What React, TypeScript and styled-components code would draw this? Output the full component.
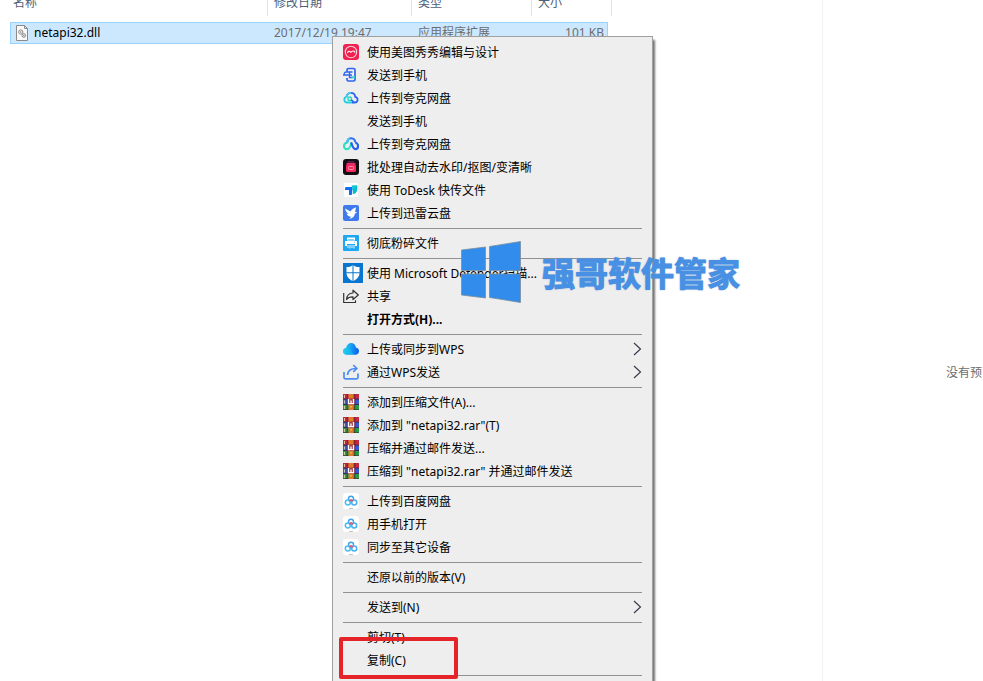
import React from "react";
import styled, { createGlobalStyle } from "styled-components";

const GlobalStyle = createGlobalStyle`
  * { box-sizing: border-box; }
  body {
    margin: 0;
    background: #fff;
    font-family: "Noto Sans", "Noto Sans CJK SC", sans-serif;
    font-size: 12px;
    color: #000;
  }
`;

const Explorer = styled.div`
  position: relative;
  display: flex;
  height: 100vh;
  overflow: hidden;
`;

const FilePane = styled.main`
  flex: 1;
  min-width: 0;
  padding-left: 10px;
`;

const PreviewPane = styled.aside`
  flex: 0 0 161px;
  display: flex;
  align-items: center;
  justify-content: flex-end;
  padding: 62px 1px 0 0;
  border-left: 1px solid #f2f2f2;
  color: #6d6d6d;
`;

const FileTable = styled.table`
  display: block;
  width: 602px;
`;

const TableHead = styled.thead`
  display: block;
`;

const TableBody = styled.tbody`
  display: block;
  padding: 6px 4px 0 0;
`;

const HeadRow = styled.tr`
  display: grid;
  grid-template-columns: 258px 144px 120px 80px;
  height: 16px;
`;

const HeadCell = styled.th<{ $first?: boolean }>`
  padding: 0 0 0 ${(p) => (p.$first ? 3 : 6)}px;
  border-right: 1px solid #e2e2e2;
  color: #4c607a;
  font-weight: 400;
  line-height: 6px;
  text-align: left;
`;

const FileRow = styled.tr`
  display: grid;
  grid-template-columns: 257px 144px 120px 1fr;
  align-items: center;
  height: 22px;
  border: 1px solid #99d1ff;
  background: #cce8ff;
`;

const Cell = styled.td<{ $strong?: boolean; $end?: boolean }>`
  display: flex;
  align-items: center;
  justify-content: ${(p) => (p.$end ? "flex-end" : "flex-start")};
  gap: 4px;
  padding: 0 ${(p) => (p.$end ? 3 : 0)}px 0 ${(p) => (p.$strong ? 3 : 6)}px;
  color: ${(p) => (p.$strong ? "#000" : "#6d6d6d")};
  line-height: 20px;
  white-space: nowrap;
`;

const Menu = styled.div`
  position: absolute;
  top: 36px;
  left: 332px;
  width: 321px;
  padding: 4px 10px 8px;
  border: 1px solid #a0a0a0;
  background: #eee;
  box-shadow: 2px 4px 2px rgba(0, 0, 0, 0.55);
`;

const MenuItem = styled.button<{ $bold?: boolean }>`
  display: flex;
  align-items: center;
  width: 100%;
  height: 23px;
  padding: 0;
  border: 0;
  background: none;
  color: #000;
  font-family: inherit;
  font-size: 12px;
  font-weight: ${(p) => (p.$bold ? 700 : 400)};
  line-height: 20px;
  text-align: left;
  white-space: nowrap;
`;

const IconSlot = styled.span<{ $end?: boolean }>`
  flex: 0 0 ${(p) => (p.$end ? 9 : 24)}px;
  display: flex;
  align-items: center;
  align-self: flex-start;
  height: 22px;
`;

const Label = styled.span`
  flex: 1;
`;

const Separator = styled.hr`
  height: 1px;
  margin: 3px 0;
  border: 0;
  background: #919191;
`;

const Watermark = styled.div`
  position: absolute;
  top: 240px;
  left: 460px;
  display: flex;
  align-items: center;
  gap: 21px;
  color: #4790e4;
  font-family: "Noto Sans CJK SC", sans-serif;
  font-size: 33px;
  font-weight: 700;
  line-height: 64px;
  white-space: nowrap;
  text-shadow: 0 0 2px rgba(110, 130, 155, 0.7);
  -webkit-text-stroke: 1px #4790e4;
  pointer-events: none;
`;

const Highlight = styled.div`
  position: absolute;
  top: 637px;
  left: 339px;
  width: 119px;
  height: 42px;
  border: 4px solid #e5242a;
  border-radius: 2px;
  pointer-events: none;
`;

const Svg = ({ size = 16, children }: { size?: number; children: React.ReactNode }) => (
  <svg width={size} height={size} viewBox="0 0 16 16" fill="none" aria-hidden="true">
    {children}
  </svg>
);

const DllIcon = () => (
  <Svg>
    <path d="M2.5.5h8l3 3v12h-11z" fill="#fafafa" stroke="#8a8a8a" />
    <path d="M10.5.5v3h3" stroke="#8a8a8a" />
    <circle cx="6.8" cy="7" r="2.1" stroke="#888" />
    <circle cx="6.8" cy="7" r=".8" fill="#888" />
    <circle cx="9.8" cy="10.5" r="1.8" stroke="#888" />
    <circle cx="9.8" cy="10.5" r=".7" fill="#888" />
  </Svg>
);

const MeituIcon = () => (
  <Svg>
    <rect width="16" height="16" rx="3" fill="#f0204f" />
    <circle cx="8" cy="8" r="5.7" stroke="#ffd5df" strokeWidth="1.1" />
    <path d="M4.5 9c.5-2 1.700-2.200 3.500-.8 1.400-1.400 3-1.600 3.700-.7M11.700 7.500v1.300" stroke="#fff" strokeWidth="1.1" />
  </Svg>
);

const PhoneIcon = () => (
  <Svg>
    <path d="M4 4.800V3c0-1 .6-1.500 1.500-1.500h5c1 0 1.500.6 1.500 1.500v9.500c0 1-.6 1.500-1.500 1.500h-5C4.500 14 4 13.400 4 12.500V11" stroke="#2f65ee" strokeWidth="1.7" />
    <path d="M9.500 5H3.200C1.800 5 1.200 5.800 1.200 7.300V8M0 8h9M6.500 5.500v5h3" stroke="#2f65ee" strokeWidth="1.4" />
    <path d="M8.500 10.300H12" stroke="#30d8bd" strokeWidth="2" />
  </Svg>
);

const QuarkSmallIcon = () => (
  <Svg>
    <path d="M3.5 6.800C4.100 4 5.800 2.900 8 2.900c2.300 0 4 1.500 4.200 3.900 1.500.4 2.400 1.400 2.400 2.900 0 1.800-1.200 2.800-3 2.800H9" stroke="#2868f0" strokeWidth="1.8" />
    <path d="M3.300 7C4 4 5.600 2.900 8 2.900" stroke="#4cc9f7" strokeWidth="1.8" />
    <path d="M9 12.500H4.500c-2 0-3.200-1-3.200-3 0-1.600.9-2.500 2.300-2.700" stroke="#22cfe0" strokeWidth="1.8" />
    <circle cx="6.700" cy="8.800" r="1.800" stroke="#2ed3c2" strokeWidth="1.400" />
    <path d="m8.200 9.800 2.600 2.400" stroke="#2868f0" strokeWidth="1.6" />
  </Svg>
);

const QuarkIcon = () => (
  <Svg>
    <path d="M4.200 6.400C4.500 3.500 6 2.200 8.200 2.200c2.500 0 4.100 1.800 4 4.200" stroke="#2d70f0" strokeWidth="2.1" />
    <path d="M8.300 6.300c-.6 3.900-2 6.800-4.300 6.800-1.900 0-3-1.300-3-3.200 0-2 1.600-3.300 3.600-3.300" stroke="#2ce0c2" strokeWidth="2.1" />
    <path d="M4.500 6.500C4.300 4.500 5.300 3 6.900 2.500" stroke="#48c5ee" strokeWidth="2.1" />
    <path d="M8.200 6.400c1.200 4.400 2.200 6.700 4.200 6.700 1.600 0 2.700-1.300 2.700-3.100 0-1.900-1-3-2.800-3.500" stroke="#2861ef" strokeWidth="2.1" />
  </Svg>
);

const BatchIcon = () => (
  <Svg>
    <rect width="16" height="16" rx="3" fill="#130d14" />
    <path d="M4.500 3h7" stroke="#8d2d64" />
    <path d="M3.500 4.500h9" stroke="#d82e73" />
    <rect x="3" y="5" width="10" height="8" rx="1.500" fill="#f7265c" />
    <rect x="5.500" y="7.500" width="5" height="3" rx="1" stroke="#ff9db5" />
  </Svg>
);

const ToDeskIcon = () => (
  <Svg>
    <rect x="1" y="1" width="14" height="14" rx="1" fill="#fff" />
    <path d="M8.500 3.500h5.800v3c0 3.300-1.600 5.500-4.500 5.500V8z" fill="#08b8d5" />
    <path d="M2.500 5h7l-.7 8H6V8H1.800z" fill="#126df0" />
    <path d="m9 5 2-1.500h3L9.300 8z" fill="#10d0cf" />
  </Svg>
);

const ThunderIcon = () => (
  <Svg>
    <rect width="16" height="16" rx="2" fill="#3f79ee" />
    <path d="M2 3.500 7.600 6.500c.7-1.800 2.300-2.700 5.400-4.300l-.9 4.700 2.300.9-2.500.7c-.3 3-2 4.900-5.700 5.300l2-2C5.700 11.600 4 10.500 3.600 8.500l2.200.4C3.900 7.800 2.500 6 2 3.500Z" fill="#fff" />
  </Svg>
);

const ShredIcon = () => (
  <Svg>
    <rect width="16" height="16" rx="1" fill="#1ea7f3" />
    <path d="M4 2.500h8v3H4zM2 6h12v5h-2V9H4v2H2z" fill="#fff" />
    <path d="M5 10v3M7 10v3.500M9 10v3M11 10v3.500" stroke="#e8f7ff" />
    <path d="M5 4.500h6M11 7.500h1" stroke="#7dd0fc" />
  </Svg>
);

const DefenderIcon = () => (
  <Svg size={20}>
    <path d="M0 0h16v16H0z" fill="#0875d1" />
    <path d="M8 1.500c1.500 1.200 3.200 1.700 5.200 1.700v4.500c0 3-2 5.200-5.200 6.700-3.200-1.500-5.200-3.700-5.200-6.700V3.200c2 0 3.700-.5 5.200-1.700Z" fill="#fff" />
    <path d="M8 1.500v13M2.500 7.800h11" stroke="#0875d1" strokeWidth=".8" />
  </Svg>
);

const ShareIcon = () => (
  <Svg>
    <path d="M.7 5v9.500h11.800v-2.300" stroke="#333" strokeWidth="1.2" />
    <path d="M10 2.200 15.300 7 10 11.500V8.900c-3-.1-4.900.6-6.400 2.600C3.800 7.500 6 5.200 10 5z" stroke="#333" strokeWidth="1.2" strokeLinejoin="round" />
  </Svg>
);

const WpsCloudIcon = () => (
  <Svg>
    <defs>
      <linearGradient id="cloud-fill" x1="0" y1="8" x2="16" y2="10" gradientUnits="userSpaceOnUse">
        <stop stopColor="#27d2ed" />
        <stop offset=".5" stopColor="#149cf5" />
        <stop offset="1" stopColor="#075eea" />
      </linearGradient>
    </defs>
    <path d="M3.800 13.800C1.500 13.800 0 12.300 0 10.300c0-1.700 1.200-3 3-3.200C3.600 4 5.500 2 8.200 2c2.600 0 4.300 1.800 4.700 4.400 2 .3 3.100 1.700 3.100 3.500 0 2.300-1.500 3.900-3.700 3.900z" fill="url(#cloud-fill)" />
    <path d="M3 7.100c3-.4 5 1.400 7.500 6.700H3.800C1.500 13.800 0 12.300 0 10.300c0-1.700 1.200-3 3-3.200Z" fill="#17cbe9" opacity=".5" />
  </Svg>
);

const WpsSendIcon = () => (
  <Svg>
    <path d="M1 8v5.500c0 .8.500 1.300 1.300 1.300h11.400c.8 0 1.300-.5 1.300-1.300V9.500" stroke="#4a8cf0" strokeWidth="1.7" />
    <path d="M4.500 11C4.800 7 7.500 4.500 13 4.500M10.200 1l3.600 3.500L10.200 8" stroke="#4a8cf0" strokeWidth="1.7" />
  </Svg>
);

const RarIcon = () => (
  <Svg>
    <path d="M0 0h16v16H0z" fill="#3b2438" />
    <path d="M0 0h16v4.700H0z" fill="#c62843" />
    <path d="M0 5.500h16v4.700H0z" fill="#3659cf" />
    <path d="M0 11h16v4.500H0z" fill="#2a9a46" />
    <path d="M1.500 1v3M1.500 6.500v3M1.500 12v3" stroke="#f2d9a0" strokeOpacity=".8" />
    <path d="M4.200 0v16M11.800 0v16" stroke="#452536" strokeWidth=".8" />
    <path d="M5.500 0h5v16h-5z" fill="#e07b25" />
    <path d="M4.500 4.500h7v6.500h-7z" fill="#a33c49" />
    <path d="M5.500 5v4.700h5V5M8 6.500v3.200" stroke="#fff" strokeWidth="1.3" />
    <path d="M7.500 12h1v1.500h-1z" fill="#ffe28b" />
  </Svg>
);

const BaiduIcon = () => (
  <Svg>
    <rect width="16" height="16" rx="3" fill="#fff" />
    <circle cx="8" cy="5.800" r="2.500" stroke="#38a4f2" strokeWidth="1.400" />
    <circle cx="4.800" cy="9.500" r="2.500" stroke="#48bdf3" strokeWidth="1.500" />
    <circle cx="11.200" cy="9.500" r="2.500" stroke="#48b1ef" strokeWidth="1.500" />
    <path d="M6.300 8.300 8 6.800l1.700 1.500" stroke="#ee536c" strokeWidth="1.500" />
    <path d="M6 15.500h4" stroke="#c4c4c4" />
  </Svg>
);

const Chevron = () => (
  <svg width="9" height="14" viewBox="0 0 9 14" fill="none" aria-hidden="true">
    <path d="m1 1 6.500 6L1 13" stroke="#33334a" strokeWidth="1.1" />
  </svg>
);

const WindowsLogo = () => (
  <svg width="61" height="62" viewBox="0 0 61 62" aria-hidden="true">
    <g fill="#318cec" stroke="#7e8d9c" strokeWidth=".8">
      <path d="m1.500 9 24-3v23.500h-24zM29.500 5.500 60.500.5v29h-31zM1.500 33h24v24l-24-3zM29.500 33h31v28.500l-31-5z" />
    </g>
  </svg>
);

type Entry = { label: string; icon?: React.ComponentType; bold?: boolean; submenu?: boolean };

const groups: Entry[][] = [
  [
    { label: "使用美图秀秀编辑与设计", icon: MeituIcon },
    { label: "发送到手机", icon: PhoneIcon },
    { label: "上传到夸克网盘", icon: QuarkSmallIcon },
    { label: "发送到手机" },
    { label: "上传到夸克网盘", icon: QuarkIcon },
    { label: "批处理自动去水印/抠图/变清晰", icon: BatchIcon },
    { label: "使用 ToDesk 快传文件", icon: ToDeskIcon },
    { label: "上传到迅雷云盘", icon: ThunderIcon },
  ],
  [{ label: "彻底粉碎文件", icon: ShredIcon }],
  [
    { label: "使用 Microsoft Defender扫描...", icon: DefenderIcon },
    { label: "共享", icon: ShareIcon },
    { label: "打开方式(H)...", bold: true },
  ],
  [
    { label: "上传或同步到WPS", icon: WpsCloudIcon, submenu: true },
    { label: "通过WPS发送", icon: WpsSendIcon, submenu: true },
  ],
  [
    { label: "添加到压缩文件(A)...", icon: RarIcon },
    { label: '添加到 "netapi32.rar"(T)', icon: RarIcon },
    { label: "压缩并通过邮件发送...", icon: RarIcon },
    { label: '压缩到 "netapi32.rar" 并通过邮件发送', icon: RarIcon },
  ],
  [
    { label: "上传到百度网盘", icon: BaiduIcon },
    { label: "用手机打开", icon: BaiduIcon },
    { label: "同步至其它设备", icon: BaiduIcon },
  ],
  [{ label: "还原以前的版本(V)" }],
  [{ label: "发送到(N)", submenu: true }],
  [{ label: "剪切(T)" }, { label: "复制(C)" }],
];

export default function App() {
  return (
    <>
      <GlobalStyle />
      <Explorer>
        <FilePane>
          <FileTable cellSpacing={0}>
            <TableHead>
              <HeadRow>
                <HeadCell $first>名称</HeadCell>
                <HeadCell>修改日期</HeadCell>
                <HeadCell>类型</HeadCell>
                <HeadCell>大小</HeadCell>
              </HeadRow>
            </TableHead>
            <TableBody>
              <FileRow>
                <Cell $strong>
                  <DllIcon />
                  netapi32.dll
                </Cell>
                <Cell>2017/12/19 19:47</Cell>
                <Cell>应用程序扩展</Cell>
                <Cell $end>101 KB</Cell>
              </FileRow>
            </TableBody>
          </FileTable>
        </FilePane>
        <PreviewPane>没有预</PreviewPane>

        <Menu role="menu">
          {groups.map((group, g) => (
            <React.Fragment key={g}>
              {group.map(({ label, icon: Icon, bold, submenu }, i) => (
                <MenuItem key={i} type="button" role="menuitem" $bold={bold}>
                  <IconSlot>{Icon && <Icon />}</IconSlot>
                  <Label>{label}</Label>
                  {submenu && (
                    <IconSlot $end>
                      <Chevron />
                    </IconSlot>
                  )}
                </MenuItem>
              ))}
              <Separator />
            </React.Fragment>
          ))}
        </Menu>

        <Watermark>
          <WindowsLogo />
          <span>强哥软件管家</span>
        </Watermark>
        <Highlight />
      </Explorer>
    </>
  );
}
